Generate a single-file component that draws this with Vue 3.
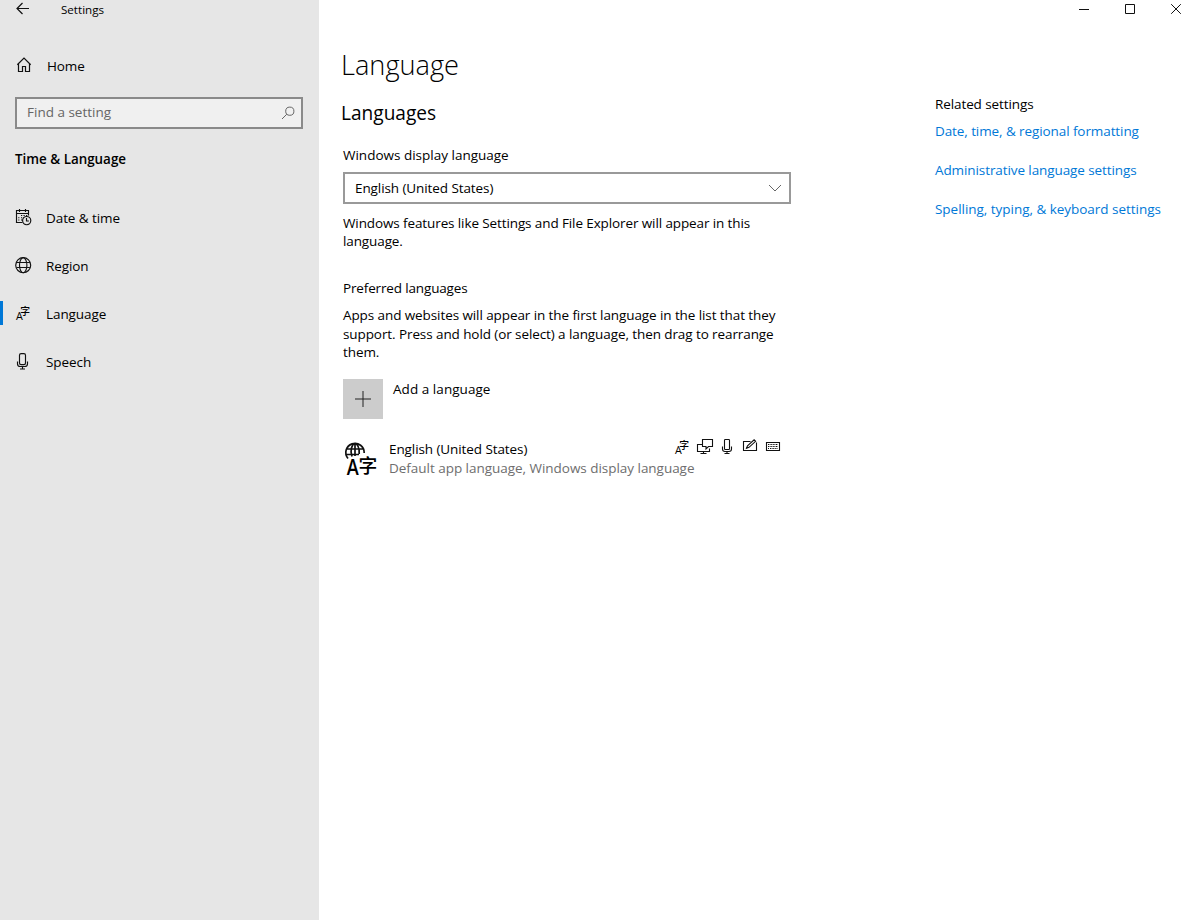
<script setup>
import { h } from 'vue'

const nav = [
  { id: 'date', label: 'Date & time' },
  { id: 'region', label: 'Region' },
  { id: 'language', label: 'Language', active: true },
  { id: 'speech', label: 'Speech' },
]

const related = [
  { label: 'Date, time, & regional formatting', cls: 'tight' },
  { label: 'Administrative language settings', cls: 'tight' },
  { label: 'Spelling, typing, & keyboard settings', cls: 'snug' },
]

const cjk = '"Noto Sans CJK SC", sans-serif'
const latin = '"Open Sans", sans-serif'

// Small "A / character" symbol shared by the navigation and the feature list
const LanguageGlyph = () =>
  h('svg', { width: 16, height: 16, viewBox: '0 0 16 16' }, [
    h('text', { x: 1, y: 15, 'font-size': 10.8, 'font-weight': 500, 'font-family': latin, textLength: 6.8, lengthAdjust: 'spacingAndGlyphs' }, 'A'),
    h('text', { x: 5.2, y: 9.6, 'font-size': 9.8, 'font-weight': 500, 'font-family': cjk }, '字'),
  ])
</script>

<template>
  <div class="window">
    <aside class="sidebar">
      <div class="titlebar">
        <svg class="back" width="14" height="14" viewBox="0 0 14 14">
          <path d="M13 7.5H1M6.500 2 1 7.500 6.500 13" />
        </svg>
        <span class="apptitle">Settings</span>
      </div>

      <div class="home">
        <svg width="16" height="16" viewBox="0 0 16 16">
          <path d="M1.300 7.700 8 1.100l6.700 6.600M2.500 6.700v7.800h4v-5h3v5h4V6.700" />
        </svg>
        <span>Home</span>
      </div>

      <div class="search">
        <span>Find a setting</span>
        <svg width="14" height="14" viewBox="0 0 14 14">
          <circle cx="8.800" cy="5.200" r="4.100" />
          <path d="M5.800 8.200 1 13" />
        </svg>
      </div>

      <h3>Time &amp; Language</h3>

      <nav>
        <a v-for="n in nav" :key="n.id" :class="['item', n.id, { active: n.active }]">
          <span class="ico">
            <svg v-if="n.id === 'date'" width="17" height="17" viewBox="0 0 17 17">
              <path d="M7.500 13.500h-6v-12h12v5M1.500 4.500h12M4.500 0v3M10.500 0v3" />
              <path class="dots" d="M6 6.500h1.200M8.500 6.500h1.200M11 6.500h1.200M3.200 8.700h1.200M6 8.700h1.200M3.200 11h1.200M6 11h1.200M8.300 8.700h.8" />
              <circle cx="11.700" cy="11.600" r="4.100" />
              <path d="M11.500 9v3h2.400" />
            </svg>
            <svg v-else-if="n.id === 'region'" width="17" height="17" viewBox="0 0 17 17">
              <circle cx="8.200" cy="8.200" r="7.500" />
              <ellipse cx="8.200" cy="8.200" rx="3.700" ry="7.500" />
              <path d="M1.500 5.500h13.400M1.500 10.500h13.400" />
            </svg>
            <LanguageGlyph v-else-if="n.id === 'language'" />
            <svg v-else width="12" height="17" viewBox="0 0 12 17">
              <rect x="2.500" y=".6" width="6" height="11" rx="1.600" />
              <path d="M.5 8.500v2.200q0 2.800 2.800 2.800h4.400q2.800 0 2.800-2.800V8.500M5.500 13.500v3M3 16h5" />
            </svg>
          </span>
          <span>{{ n.label }}</span>
        </a>
      </nav>
    </aside>

    <div class="content">
      <div class="caption">
        <svg width="10" height="10" viewBox="0 0 10 10"><path d="M0 5.500h10" /></svg>
        <svg width="10" height="10" viewBox="0 0 10 10"><path d="M.5.5h9v9h-9z" /></svg>
        <svg width="10" height="10" viewBox="0 0 10 10"><path d="m.2.2 9.600 9.600M9.800.2.2 9.800" /></svg>
      </div>

      <div class="columns">
        <main>
          <h1>Language</h1>
          <h2>Languages</h2>
          <p class="label wdl">Windows display language</p>
          <div class="select">
            <span class="tight">English (United States)</span>
            <svg width="14" height="8" viewBox="0 0 14 8"><path d="m1 1 6 6 6-6" /></svg>
          </div>
          <p class="body hint">Windows features like Settings and File Explorer will appear in this<br />language.</p>
          <p class="label pref">Preferred languages</p>
          <p class="body about">Apps and websites will appear in the first language in the list that they<br />support. Press and hold (or select) a language, then drag to rearrange<br />them.</p>

          <div class="add">
            <span class="plus">
              <svg width="16" height="16" viewBox="0 0 16 16"><path d="M8 0v16M0 8h16" /></svg>
            </span>
            <span>Add a language</span>
          </div>

          <div class="lang">
            <svg class="big" width="34" height="34" viewBox="0 0 34 34">
              <path d="M4 16.500A9.200 9.200 0 1 1 20.200 11M8 14.500C5.800 9 7.600 2.500 11 1.500 14.400 2.500 15.400 7 15.200 12M11 1.500V14M2.500 7h17M2 12.500H15" />
              <text x="2.800" y="33" font-size="21.500" font-weight="600" font-family="Open Sans, sans-serif" textLength="12" lengthAdjust="spacingAndGlyphs">A</text>
              <text x="14.600" y="30.600" font-size="18.800" font-weight="500" font-family="Noto Sans CJK SC, sans-serif">字</text>
            </svg>
            <div class="names">
              <span class="tight">English (United States)</span>
              <span class="sub">Default app language, Windows display language</span>
            </div>
            <div class="features">
              <LanguageGlyph />
              <svg width="16" height="16" viewBox="0 0 16 16">
                <path d="M5.500 5.500h-5v7h12V9.500M3.500 14.500h6M6.500 12.500v2M5.500 .5h10v7h-4l-2.500 2.500v-2.500H5.500z" />
              </svg>
              <svg class="mic" width="12" height="16" viewBox="0 0 12 16">
                <rect x="3.500" y=".5" width="5" height="10" rx=".8" />
                <path d="M1.500 7.500V10q0 2.500 2.500 2.500h4q2.500 0 2.500-2.500V7.500M6 12.500v2.500M3.500 14.500h5" />
              </svg>
              <svg class="pen" width="16" height="16" viewBox="0 0 16 16">
                <path d="M8.500 2.500h-7v9h13v-8M4.500 9.300l1-2.500 6.600-6 1.500 1.500-6.600 6z" />
              </svg>
              <svg width="16" height="16" viewBox="0 0 16 16">
                <path d="M1.500 3.500h13v8h-13z" />
                <path class="keys" d="M3 5.500h10M3 7.500h10M3 9.500h1.500M5 9.500h6M11.500 9.500H13" />
              </svg>
            </div>
          </div>
        </main>

        <section class="related">
          <p>Related settings</p>
          <a v-for="r in related" :key="r.label" :class="r.cls">{{ r.label }}</a>
        </section>
      </div>
    </div>
  </div>
</template>

<style scoped>
.window {
  display: flex;
  width: 1193px;
  height: 920px;
  overflow: hidden;
  background: #fff;
  color: #000;
  font: 13.5px/18px "Open Sans", "Noto Sans", sans-serif;
  white-space: nowrap;
}
h1, h2, h3, p { margin: 0; font-weight: 400; }
svg { display: block; flex: none; fill: none; stroke: #111; stroke-width: 1; overflow: visible; }
svg text, .window :deep(text) { fill: #000; stroke: none; }
.window :deep(svg) { display: block; overflow: visible; }
.tight { letter-spacing: -.09px; }
.snug { letter-spacing: -.03px; }

.sidebar { width: 319px; flex: none; background: #e6e6e6; }
.titlebar { display: flex; height: 20px; padding-left: 16px; }
.back { margin-top: 1px; stroke-width: 1.2; }
.apptitle { margin-left: 31px; font-size: 11.6px; line-height: 19px; }
.home { display: flex; align-items: center; height: 40px; margin-top: 26px; padding-left: 16px; letter-spacing: -.1px; }
.home svg { margin: -2px 15px 0 0; stroke-width: 1.2; }
.search {
  display: flex;
  align-items: center;
  justify-content: space-between;
  box-sizing: border-box;
  width: 288px;
  height: 32px;
  margin: 11px 0 0 15px;
  padding: 0 6px 0 10px;
  border: 2px solid #8a8a8a;
  background: #f0f0f0;
  color: #666;
}
.search span { margin-top: -2px; }
.search svg { stroke: #666; }
h3 { margin: 21px 0 0 15px; font-size: 13.4px; font-weight: 600; line-height: 18px; }
nav { margin-top: 26px; }
.item { display: flex; align-items: center; height: 48px; box-sizing: border-box; }
.ico { width: 46px; padding-left: 15px; box-sizing: border-box; flex: none; }
.item.speech .ico { padding-left: 17px; }
.ico svg { margin-top: -2px; stroke-width: 1.15; }
.item.region .ico svg { margin-top: -1px; }
.item.active::before { content: ""; width: 3px; height: 24px; margin-top: -2px; background: #0078d7; }
.item.active .ico { width: 43px; padding-left: 12px; }
.item > span:last-child { letter-spacing: -.08px; }

.content { flex: 1; min-width: 0; }
.caption { display: flex; justify-content: flex-end; gap: 36px; height: 20px; padding: 4px 12px 0 0; box-sizing: border-box; }
.columns { display: flex; }
main { width: 448px; margin-left: 24px; }
h1 { margin: 26px 0 0 -2px; font-size: 27.2px; font-weight: 300; line-height: 38px; }
h2 { margin: 16px 0 0 -2px; font-size: 19.1px; line-height: 26px; }
.label { line-height: 18px; }
.wdl { margin-top: 20px; }
.select {
  display: flex;
  align-items: center;
  justify-content: space-between;
  box-sizing: border-box;
  height: 32px;
  margin-top: 8px;
  padding: 0 7px 0 10px;
  border: 2px solid #999;
}
.select svg { stroke: #666; }
.body { line-height: 18.5px; letter-spacing: -.09px; }
.hint { margin-top: 10px; line-height: 18px; letter-spacing: -.11px; }
.pref { margin-top: 29px; letter-spacing: -.15px; }
.about { margin-top: 9px; }
.add { display: flex; margin-top: 17.5px; }
.plus { display: grid; place-items: center; width: 40px; height: 40px; margin-right: 10px; background: #ccc; }
.plus svg { stroke: #222; }
.add > span:last-child { margin-top: 1px; letter-spacing: .05px; }
.lang { display: flex; margin-top: 21px; }
.big { margin: 2px 0 0 1px; stroke-width: 1.7; }
.names { display: flex; flex-direction: column; width: 284px; margin-left: 11px; line-height: 19px; }
.sub { color: #6e6e6e; letter-spacing: -.03px; }
.features { display: flex; gap: 7px; margin: -1px 0 0 1px; }
.features svg { stroke-width: 1.1; }
.mic { margin: 0 1px; }
.pen { margin-left: 1px; }
.keys { stroke-dasharray: 1 .6; }

.related { display: flex; flex-direction: column; margin: 75px 0 0 144px; }
.related p { margin-bottom: 9px; letter-spacing: -.1px; }
.related a { margin-bottom: 21px; color: #0078d7; }
</style>
